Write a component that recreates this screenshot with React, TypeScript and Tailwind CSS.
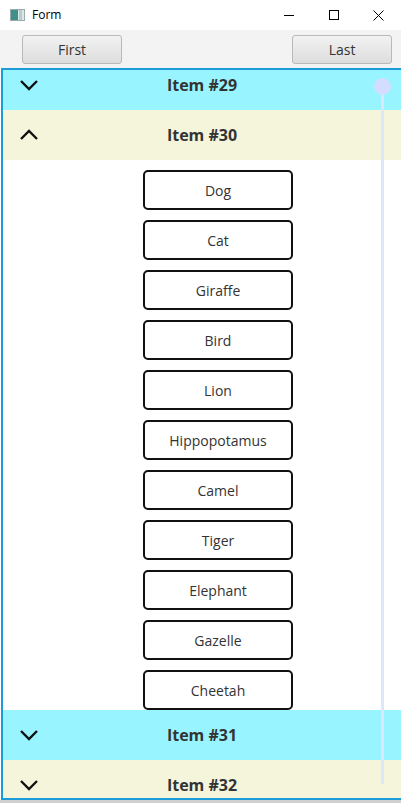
import React from "react";

const animals = [
  "Dog",
  "Cat",
  "Giraffe",
  "Bird",
  "Lion",
  "Hippopotamus",
  "Camel",
  "Tiger",
  "Elephant",
  "Gazelle",
  "Cheetah",
];

function Chevron({ up }: { up?: boolean }) {
  return (
    <svg width="20" height="12" viewBox="0 0 20 12" className="shrink-0">
      <path
        d={up ? "M2 10 L10 2 L18 10" : "M2 2 L10 10 L18 2"}
        fill="none"
        stroke="#111"
        strokeWidth="2.4"
      />
    </svg>
  );
}

function Header({ label, color, up }: { label: string; color: string; up?: boolean }) {
  return (
    <div className={`relative flex h-[50px] shrink-0 items-center justify-center ${color}`}>
      <div className="absolute left-[16px] top-1/2 -translate-y-1/2">
        <Chevron up={up} />
      </div>
      <span className="text-[16px] font-bold text-[#333]">{label}</span>
    </div>
  );
}

export default function App() {
  return (
    <div
      className="relative h-[803px] w-[401px] overflow-hidden bg-white"
      style={{ fontFamily: '"Open Sans", "Noto Sans", sans-serif' }}
    >
      {/* Title bar */}
      <div className="flex h-[30px] items-center bg-white">
        <div className="ml-[10px] flex h-[12px] w-[15px] border border-[#9aa] bg-[#dfe6e6]">
          <div className="w-[7px] bg-[#3f8f8a]" />
          <div className="ml-[1px] w-[3px] bg-[#b8cccc]" />
        </div>
        <span className="ml-[7px] text-[12px] text-black">Form</span>
        <div className="ml-auto flex items-center">
          <div className="flex w-[45px] justify-center">
            <div className="h-[1px] w-[10px] bg-black" />
          </div>
          <div className="flex w-[45px] justify-center">
            <div className="h-[10px] w-[10px] border border-black" />
          </div>
          <div className="flex w-[45px] justify-center">
            <svg width="11" height="11" viewBox="0 0 11 11">
              <path d="M0.5 0.5 L10.5 10.5 M10.5 0.5 L0.5 10.5" stroke="#000" strokeWidth="1" />
            </svg>
          </div>
        </div>
      </div>

      {/* Toolbar */}
      <div className="flex h-[38px] items-start justify-between bg-[#f3f3f3] pl-[22px] pr-[9px] pt-[5px]">
        <button className="h-[29px] w-[100px] rounded-[3px] border border-[#b9b9b9] bg-gradient-to-b from-[#f2f2f2] to-[#dddddd] text-[14px] text-[#333]">
          First
        </button>
        <button className="h-[29px] w-[100px] rounded-[3px] border border-[#b9b9b9] bg-gradient-to-b from-[#f2f2f2] to-[#dddddd] text-[14px] text-[#333]">
          Last
        </button>
      </div>

      {/* Accordion panel */}
      <div className="relative ml-[1px] h-[732px] overflow-hidden border-y-2 border-l-2 border-[#1b9bd7]">
        <div className="-mt-[10px] flex flex-col">
          <Header label="Item #29" color="bg-[#98f5ff]" />
          <Header label="Item #30" color="bg-[#f5f5dc]" up />
          <div className="flex flex-col items-center gap-[10px] pl-[32px] pt-[10px]">
            {animals.map((a) => (
              <button
                key={a}
                className="h-[40px] w-[150px] rounded-[5px] border-2 border-[#111] bg-white text-[14px] text-[#333]"
              >
                {a}
              </button>
            ))}
          </div>
          <Header label="Item #31" color="bg-[#98f5ff]" />
          <Header label="Item #32" color="bg-[#f5f5dc]" />
        </div>

        {/* Scrollbar overlay */}
        <div className="absolute left-[378px] top-[24px] h-[690px] w-[3px] bg-[#dce7fb]" />
        <div className="absolute left-[371px] top-[8px] h-[17px] w-[17px] rounded-full bg-[#d2ddff]" />
      </div>
      <div className="h-[3px] bg-[#cfcfcf]" />
    </div>
  );
}
